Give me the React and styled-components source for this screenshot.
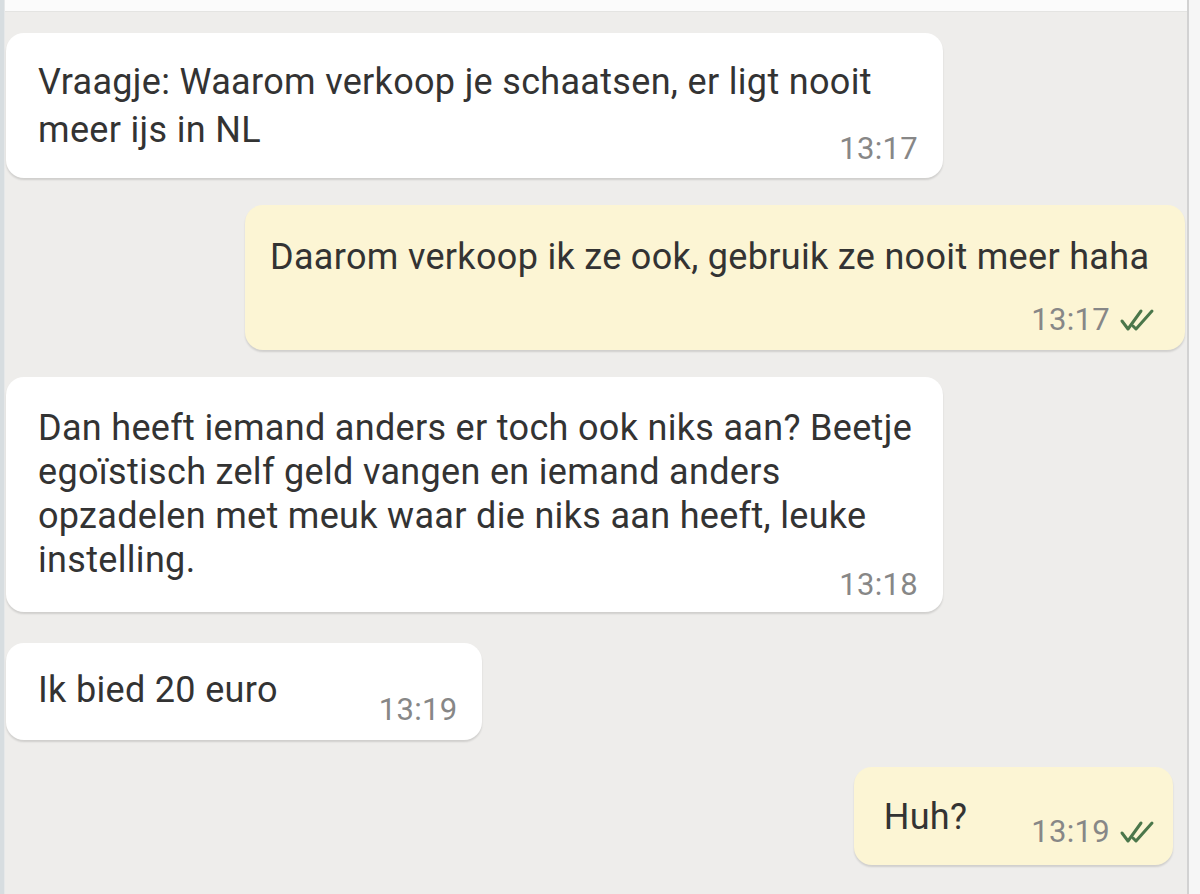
import React from "react";
import styled, { createGlobalStyle } from "styled-components";

const Global = createGlobalStyle`
  html, body { margin: 0; padding: 0; background: #eeedeb; }
  body { font-family: Roboto, "Noto Sans", "Liberation Sans", sans-serif; }
`;

const Screen = styled.div`
  display: flex;
  width: 1200px;
  height: 894px;
  overflow: hidden;
  background: #eeedeb;
`;

const LeftEdge = styled.div`
  width: 4px;
  flex: none;
  background: #d7dde0;
  border-right: 1px solid #e6e8e9;
`;

const RightEdge = styled.div`
  width: 11px;
  flex: none;
  background: #f6f6f6;
  border-left: 2px solid #d2d2d2;
`;

const Main = styled.div`
  flex: 1;
  display: flex;
  flex-direction: column;
  min-width: 0;
`;

const TopStrip = styled.div`
  height: 11px;
  flex: none;
  background: #fbfbfb;
  border-bottom: 1px solid #e4e4e2;
`;

const Thread = styled.div`
  display: flex;
  flex-direction: column;
  gap: 27px;
  padding: 21px 0 0 1px;
`;

const Row = styled.div`
  display: flex;
  justify-content: ${(p) => (p.$out ? "flex-end" : "flex-start")};
  padding-right: ${(p) => p.$right || 0}px;
  margin-top: ${(p) => p.$mt || 0}px;
`;

const Bubble = styled.div`
  background: ${(p) => (p.$out ? "#fcf5d4" : "#ffffff")};
  border-radius: 18px;
  box-shadow: 0 2px 2px rgba(0, 0, 0, 0.13);
  width: ${(p) => (p.$w ? `${p.$w}px` : "auto")};
  box-sizing: border-box;
  padding: ${(p) => p.$pad};
  display: flex;
  flex-direction: ${(p) => (p.$inline ? "row" : "column")};
  align-items: ${(p) => (p.$inline ? "flex-start" : "stretch")};
  gap: ${(p) => p.$gap || 0}px;
`;

const Text = styled.div`
  font-size: 36px;
  line-height: ${(p) => p.$lh || 44}px;
  color: #333333;
  white-space: nowrap;
  letter-spacing: 0.32px;
`;

const Meta = styled.div`
  display: flex;
  justify-content: flex-end;
  align-items: center;
  gap: 9px;
  margin-top: ${(p) => p.$mt || 0}px;
  font-size: 31px;
  line-height: 30px;
  color: #878787;
  letter-spacing: 0.3px;
  white-space: nowrap;
`;

const Checks = () => (
  <svg width="36" height="24" viewBox="0 0 36 24" fill="none">
    <path
      d="M3 13 L9 21 L22 3"
      stroke="#4b774b"
      strokeWidth="3"
      strokeLinecap="round"
      strokeLinejoin="round"
    />
    <path
      d="M14 18 L17 21 L33 3"
      stroke="#4b774b"
      strokeWidth="3"
      strokeLinecap="round"
      strokeLinejoin="round"
    />
  </svg>
);

export default function App() {
  return (
    <Screen>
      <Global />
      <LeftEdge />
      <Main>
        <TopStrip />
        <Thread>
          <Row>
            <Bubble $w={937} $pad="25px 25px 14px 32px">
              <Text $lh={48}>
                Vraagje: Waarom verkoop je schaatsen, er ligt nooit
                <br />
                meer ijs in NL
              </Text>
              <Meta $mt={-20}>13:17</Meta>
            </Bubble>
          </Row>
          <Row $out $right={2}>
            <Bubble $out $w={940} $pad="30px 30px 15px 25px">
              <Text>Daarom verkoop ik ze ook, gebruik ze nooit meer haha</Text>
              <Meta $mt={26}>
                13:17 <Checks />
              </Meta>
            </Bubble>
          </Row>
          <Row>
            <Bubble $w={937} $pad="29px 25px 12px 32px">
              <Text>
                Dan heeft iemand anders er toch ook niks aan? Beetje
                <br />
                egoïstisch zelf geld vangen en iemand anders
                <br />
                opzadelen met meuk waar die niks aan heeft, leuke
                <br />
                instelling.
              </Text>
              <Meta $mt={-12}>13:18</Meta>
            </Bubble>
          </Row>
          <Row $mt={4}>
            <Bubble $inline $gap={101} $pad="25px 25px 15px 32px">
              <Text>Ik bied 20 euro</Text>
              <Meta $mt={27}>13:19</Meta>
            </Bubble>
          </Row>
          <Row $out $right={14}>
            <Bubble $out $inline $gap={64} $pad="28px 18px 18px 30px">
              <Text>Huh?</Text>
              <Meta $mt={22}>
                13:19 <Checks />
              </Meta>
            </Bubble>
          </Row>
        </Thread>
      </Main>
      <RightEdge />
    </Screen>
  );
}
